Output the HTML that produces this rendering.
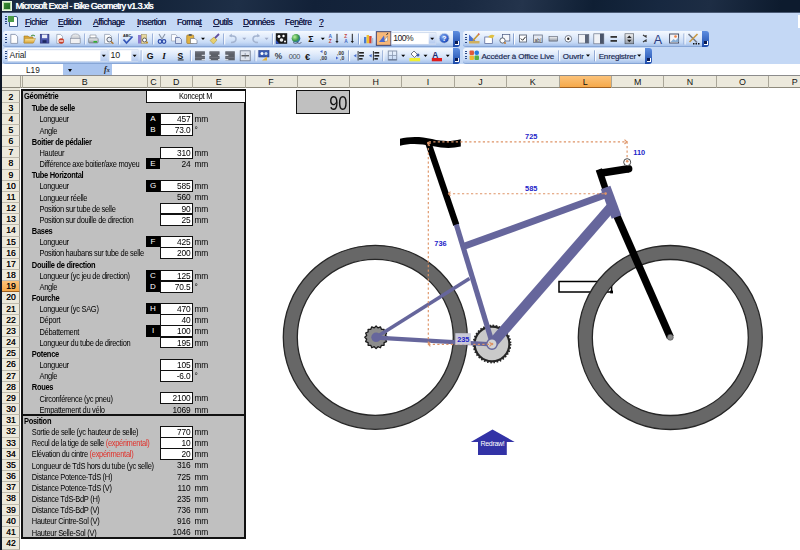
<!DOCTYPE html><html><head><meta charset="utf-8"><style>
*{margin:0;padding:0;box-sizing:border-box}
html,body{width:800px;height:550px;overflow:hidden;background:#fff;font-family:"Liberation Sans",sans-serif;position:relative}
.a{position:absolute}
.t{white-space:nowrap}
#title{left:0;top:0;width:800px;height:13px;background:linear-gradient(100deg,#1b2b42 0px,#14243a 150px,#1e2f47 235px,#122138 310px,#182840 450px,#24344c 515px,#0f1f34 585px,#172840 650px,#1d2d44 700px,#0d1b2e 770px);border-bottom:1px solid #4a5a74}
.tt{left:15.4px;top:0px;color:#fff;font:9px "Liberation Sans",sans-serif;letter-spacing:-0.6px;line-height:12.4px;white-space:nowrap;text-shadow:0.3px 0 0 #fff,0 0 2px #6a80a0}
#menu{left:0;top:13px;width:800px;height:50.5px;background:#c4d8f5}
.mi{top:16.5px;font:8.6px "Liberation Sans",sans-serif;letter-spacing:-0.45px;color:#18204a;line-height:10px;white-space:nowrap;text-shadow:0 0 0.25px #18204a}
.mi u{text-decoration:underline;text-underline-offset:1px}
.tb{background:linear-gradient(180deg,#f5f9fe 0%,#e0ebfb 40%,#c8dbf6 75%,#a6c1ea 100%);border-radius:3px 0 0 3px;height:15.5px;border-bottom:1px solid #87a6d6}
.cap{background:linear-gradient(180deg,#5e8ee0,#1c4aaa);border-radius:0 3px 3px 0;width:7px;height:15.5px}
.cap::after{content:"";position:absolute;left:2px;bottom:2px;width:3px;height:3px;border-right:1px solid #fff;border-bottom:1px solid #fff;background:#0a1a50}
.grip{width:2px;height:10px;background:repeating-linear-gradient(180deg,#2c4a88 0 1px,transparent 1px 2.5px)}
.sep{width:2px;height:11px;border-left:1px solid #8aa6d6;border-right:1px solid #fff}
.dd{width:0;height:0;border-left:2px solid transparent;border-right:2px solid transparent;border-top:2px solid #000}
.fld{background:#fff;border:1px solid #c9d6ea;height:13px}
.fdd{background:linear-gradient(180deg,#dbe6f8,#b8cdef);width:6px;height:11px}
.tbt{font:7.6px "Liberation Sans",sans-serif;color:#102050;white-space:nowrap;line-height:10px}
#fbar{left:2px;top:63.5px;width:798px;height:12.5px;background:#fff;border-bottom:1px solid #8c8c8c}
#colh{left:2px;top:76px;width:798px;height:12px;background:#ece9dc;border-bottom:1px solid #8e8a7c}
.ch{top:76px;height:11.5px;border-left:1px solid #aaa698;font:8.9px "Liberation Sans",sans-serif;color:#111;text-align:center;line-height:13px}
.rh{left:2px;width:18px;padding-left:1px;text-shadow:0 0 0.3px #000;border-bottom:1px solid #bfbbae;border-right:1px solid #9a968a;font:8.6px "Liberation Sans",sans-serif;color:#111;text-align:center;background:#ece9dc}
.c{font:7.5px "Liberation Sans",sans-serif;letter-spacing:-0.3px;color:#000;white-space:nowrap;line-height:11px;transform:scaleY(1.14);transform-origin:0 55%}
.n{font:8.4px "Liberation Sans",sans-serif;letter-spacing:-0.15px;color:#000;white-space:nowrap;line-height:11px;text-align:right;transform:scaleY(1.1);transform-origin:50% 60%}
.b{font-weight:bold}
.red{color:#e0302a}
.blk{background:#000;color:#fff;font:8px "Liberation Sans",sans-serif;text-align:center;line-height:11px}
.box{background:#fff;border:1px solid #111}
</style></head><body>
<div id="title" class="a">
<div class="a" style="left:1.5px;top:1px;width:10px;height:10px;background:#b9dca8;border:1px solid #e8f6e0"><div class="a" style="left:1px;top:1px;width:6px;height:6px;background:linear-gradient(135deg,#3b8d34,#1f6a22)"></div></div>
<div class="a tt">Microsoft Excel - Bike Geometry v1.3.xls</div>
</div>
<div id="menu" class="a"></div>
<div class="a" style="left:797.5px;top:15px;width:3px;height:13px;background:#fff"></div>
<div class="a grip" style="left:5px;top:16px;height:10px"></div>
<div class="a" style="left:9px;top:16px;width:9px;height:11px;background:#fff;border:1px solid #3a5a8a;border-radius:0 2px 0 0"></div>
<div class="a" style="left:8px;top:16px;width:6px;height:6px;background:#4c9c48"></div>
<div class="a mi" style="left:25px"><u>F</u>ichier</div>
<div class="a mi" style="left:58px"><u>E</u>dition</div>
<div class="a mi" style="left:93px"><u>A</u>ffichage</div>
<div class="a mi" style="left:137px"><u>I</u>nsertion</div>
<div class="a mi" style="left:177px">Forma<u>t</u></div>
<div class="a mi" style="left:213px"><u>O</u>utils</div>
<div class="a mi" style="left:243px"><u>D</u>onnées</div>
<div class="a mi" style="left:285px">Fe<u>n</u>être</div>
<div class="a mi" style="left:319px"><u>?</u></div>
<div class="a tb" style="left:3px;top:31px;width:450px"></div>
<div class="a cap" style="left:453px;top:31px"></div>
<div class="a grip" style="left:5px;top:34px"></div>
<div class="a tb" style="left:463px;top:31px;width:239px"></div>
<div class="a cap" style="left:702px;top:31px"></div>
<div class="a grip" style="left:465px;top:34px"></div>
<div class="a tb" style="left:3px;top:48px;width:450px"></div>
<div class="a cap" style="left:453px;top:48px"></div>
<div class="a grip" style="left:5px;top:51px"></div>
<div class="a tb" style="left:463px;top:48px;width:182px"></div>
<div class="a cap" style="left:645px;top:48px"></div>
<div class="a grip" style="left:465px;top:51px"></div>
<svg class="a" style="left:0;top:0" width="800" height="64" viewBox="0 0 800 64">
<defs><linearGradient id="gy" x1="0" y1="0" x2="0" y2="1"><stop offset="0" stop-color="#f4f4f4"/><stop offset="1" stop-color="#9098a4"/></linearGradient><linearGradient id="fd" x1="0" y1="0" x2="0" y2="1"><stop offset="0" stop-color="#fbe49a"/><stop offset="1" stop-color="#d9a437"/></linearGradient><linearGradient id="dd" x1="0" y1="0" x2="0" y2="1"><stop offset="0" stop-color="#e4ecfa"/><stop offset="1" stop-color="#b4caef"/></linearGradient><radialGradient id="gl" cx="0.35" cy="0.35" r="0.7"><stop offset="0" stop-color="#b8f0a0"/><stop offset="0.6" stop-color="#3f9c4a"/><stop offset="1" stop-color="#2a6ab8"/></radialGradient><radialGradient id="hp" cx="0.4" cy="0.35" r="0.7"><stop offset="0" stop-color="#8fb4f4"/><stop offset="0.7" stop-color="#2c5cc8"/><stop offset="1" stop-color="#1c3c98"/></radialGradient></defs>
<path d="M10.8,34.4 H15.3 L17.6,36.7 V43.4 H10.8 Z" fill="#fdfdfd" stroke="#7f8ca4" stroke-width="0.8"/>
<path d="M24,36 h4 l1,1 h4 v6 h-9z" fill="#d9a437" stroke="#a07820" stroke-width="0.6"/><path d="M25,38.5 h10.5 l-2,4.5 h-9.5z" fill="url(#fd)" stroke="#b08a30" stroke-width="0.5"/><path d="M31,36 q2,-2 4,0" fill="none" stroke="#3a8a3a" stroke-width="1"/>
<rect x="40.3" y="34.3" width="8.6" height="8.8" fill="#4b57ad" stroke="#2a3378" stroke-width="0.7"/><rect x="42" y="34.6" width="5.2" height="3.6" fill="#e8ecf8"/><rect x="42.5" y="40.2" width="4" height="2.6" fill="#1e2860"/>
<path d="M56.8,34.4 H60.5 L62.5,36.4 V43.4 H56.8 Z" fill="#fdfdfd" stroke="#8a96aa" stroke-width="0.7"/><circle cx="61.3" cy="41" r="2.8" fill="#c8402c"/><rect x="59.3" y="40.4" width="4" height="1.2" fill="#fff"/>
<path d="M71,38 q0,-4 4.5,-4 q4.5,0 4.5,4 v5 h-9z" fill="url(#gy)" stroke="#8890a0" stroke-width="0.6"/><rect x="70.3" y="38.5" width="9.8" height="4.8" fill="#f0f0f2" stroke="#8890a0" stroke-width="0.6"/>
<rect x="84.25" y="33.5" width="1" height="11" fill="#8aa4d2"/><rect x="85.25" y="33.5" width="1" height="11" fill="#fff"/>
<path d="M90,35 h6 v3 h-6z" fill="#fff" stroke="#808890" stroke-width="0.6"/><rect x="88.6" y="38" width="9.6" height="5" rx="1" fill="url(#gy)" stroke="#6a7280" stroke-width="0.6"/><rect x="93.5" y="41" width="3.5" height="1.6" fill="#30b030"/>
<path d="M104.6,34.4 H109.5 L111.5,36.4 V43.4 H104.6 Z" fill="#fdfdfd" stroke="#8a96aa" stroke-width="0.7"/><circle cx="109.3" cy="39.6" r="2.4" fill="#e8eef8" stroke="#505868" stroke-width="0.9"/><path d="M111,41.4 l2.4,2.4" stroke="#b07830" stroke-width="1.4"/>
<rect x="118.2" y="33.5" width="1" height="11" fill="#8aa4d2"/><rect x="119.2" y="33.5" width="1" height="11" fill="#fff"/>
<text x="123" y="36.6" font-family="Liberation Sans" font-weight="bold" font-size="3.8" fill="#222">ABC</text><path d="M123.5,39.5 l3,3.5 l6,-6.5" fill="none" stroke="#3456b8" stroke-width="1.8"/>
<rect x="138" y="35" width="3.5" height="8.5" fill="#8a7ad0"/><rect x="141.5" y="34.5" width="5" height="9" fill="#e8d8a0" stroke="#9a8a50" stroke-width="0.5"/><circle cx="144.5" cy="40" r="2" fill="#fff" stroke="#404040" stroke-width="0.8"/><circle cx="147" cy="42.6" r="1.1" fill="#c09030"/>
<rect x="152.2" y="33.5" width="1" height="11" fill="#8aa4d2"/><rect x="153.2" y="33.5" width="1" height="11" fill="#fff"/>
<path d="M159,34 l3,5 M165,34 l-3,5" stroke="#8894a8" stroke-width="1.1"/><circle cx="160" cy="41.5" r="1.8" fill="none" stroke="#2c4aa8" stroke-width="1.2"/><circle cx="164" cy="41.5" r="1.8" fill="none" stroke="#2c4aa8" stroke-width="1.2"/>
<path d="M171.5,34.5 h4 l1.5,1.5 v5 h-5.5z" fill="#fbfbfd" stroke="#8a96aa" stroke-width="0.6"/><path d="M175.5,37.5 h4 l2,2 v4 h-6z" fill="#dfe6f4" stroke="#4a5a90" stroke-width="0.7"/>
<rect x="186.7" y="35" width="7" height="8.5" rx="1" fill="#e0b040" stroke="#9a7020" stroke-width="0.6"/><rect x="188.7" y="34" width="3" height="2" fill="#606060"/><path d="M190.5,38.5 h4.5 l2,2 v3 h-6.5z" fill="#fff" stroke="#606a80" stroke-width="0.6"/>
<path d="M201,37.8 h4 l-2,2.2z" fill="#000"/>
<path d="M210,40.5 l4,-3.5 l3,3 l-3.5,4z" fill="#e8d070" stroke="#a08a30" stroke-width="0.5"/><path d="M215,38 l4,-4" stroke="#6050a0" stroke-width="1.8"/>
<rect x="223.2" y="33.5" width="1" height="11" fill="#8aa4d2"/><rect x="224.2" y="33.5" width="1" height="11" fill="#fff"/>
<path d="M231,42.5 q5,0 5,-3.5 q0,-3 -3.5,-3 h-3" fill="none" stroke="#a4b4d0" stroke-width="1.5"/><path d="M229.5,35.5 l2.3,-2 v4z" fill="#a4b4d0"/>
<path d="M242.3,37.8 h4 l-2,2.2z" fill="#a0acc8"/>
<path d="M258,42.5 q-5,0 -5,-3.5 q0,-3 3.5,-3 h3" fill="none" stroke="#a4b4d0" stroke-width="1.5"/><path d="M259.5,35.5 l-2.3,-2 v4z" fill="#a4b4d0"/>
<path d="M264.6,37.8 h4 l-2,2.2z" fill="#a0acc8"/>
<rect x="271.9" y="33.5" width="1" height="11" fill="#8aa4d2"/><rect x="272.9" y="33.5" width="1" height="11" fill="#fff"/>
<rect x="275.8" y="33.2" width="11.4" height="10.6" fill="#1a1a1a"/><circle cx="279" cy="36.5" r="1.4" fill="#fff"/><circle cx="283.5" cy="36" r="1.2" fill="#fff"/><circle cx="281.5" cy="40" r="1.8" fill="#eee"/><circle cx="285" cy="41.5" r="1" fill="#fff"/><path d="M276,40 l3.5,3.8 h-3.5z" fill="#2a4ab8"/>
<circle cx="296" cy="38.3" r="4.3" fill="url(#gl)"/><path d="M293,42.5 q2.5,2 5,0 M297,42.5 q2.5,2 4.5,0" fill="none" stroke="#505a70" stroke-width="0.9"/>
<text x="308.3" y="42.2" font-family="Liberation Sans" font-weight="bold" font-size="9" fill="#111">&#931;</text>
<path d="M320.8,37.8 h4 l-2,2.2z" fill="#000"/>
<text x="328.5" y="38" font-family="Liberation Sans" font-weight="bold" font-size="4.8" fill="#3a64c0">A</text><text x="328.8" y="43.3" font-family="Liberation Sans" font-weight="bold" font-size="4.8" fill="#c04040">Z</text><path d="M337,33.8 v8" stroke="#222" stroke-width="1"/><path d="M335.4,41 h3.2 l-1.6,2.2z" fill="#222"/>
<text x="344.2" y="38" font-family="Liberation Sans" font-weight="bold" font-size="4.8" fill="#c04040">Z</text><text x="344.2" y="43.3" font-family="Liberation Sans" font-weight="bold" font-size="4.8" fill="#3a64c0">A</text><path d="M352.3,33.8 v8" stroke="#222" stroke-width="1"/><path d="M350.7,41 h3.2 l-1.6,2.2z" fill="#222"/>
<rect x="358.0" y="33.5" width="1" height="11" fill="#8aa4d2"/><rect x="359.0" y="33.5" width="1" height="11" fill="#fff"/>
<rect x="364" y="37" width="2.4" height="6.3" fill="#4a7ad0"/><rect x="366.6" y="35" width="2.4" height="8.3" fill="#f0c030"/><rect x="369.2" y="36" width="2.4" height="7.3" fill="#d84030"/><rect x="371.6" y="38" width="1.6" height="5.3" fill="#b0b8c8"/>
<rect x="376.3" y="31.7" width="14.6" height="13.6" fill="#f8b878" stroke="#2c3468" stroke-width="0.9"/><path d="M379,42 l5,-6.5 l1,6.5z" fill="#4a6ad0"/><path d="M384,41 l3.5,-5 v5z" fill="#fff" stroke="#666" stroke-width="0.4"/><path d="M386.5,35 l1.5,-2" stroke="#333" stroke-width="1"/>
<rect x="391.3" y="32.7" width="44.6" height="11.6" fill="#fff" stroke="#c2d2ea" stroke-width="0.7"/><rect x="428.7" y="33.2" width="7" height="10.6" fill="url(#dd)"/>
<path d="M430.2,37.8 h4 l-2,2.2z" fill="#000"/>
<text x="393.2" y="41.2" font-family="Liberation Sans" font-size="8.6" fill="#1a1a1a" letter-spacing="-0.55">100%</text>
<circle cx="444.2" cy="38.3" r="4.9" fill="url(#hp)" stroke="#c0d0ec" stroke-width="0.8"/><text x="444.2" y="41.2" font-family="Liberation Sans" font-weight="bold" font-size="7.2" fill="#fff" text-anchor="middle">?</text>
<path d="M469,34.5 v7 h7z" fill="#4a70d0"/><rect x="469" y="41" width="10.5" height="2.5" fill="#d0b060"/><path d="M473,40.5 l5.5,-6" stroke="#c89830" stroke-width="1.6"/><path d="M478.3,34.6 l1,-1" stroke="#d05040" stroke-width="1.6"/>
<rect x="484.8" y="37" width="7.5" height="6.5" fill="#fff" stroke="#4a5a90" stroke-width="0.7"/><path d="M488,37 q3,-3.5 6.5,-1.5 l-2,3z" fill="#e0c040"/>
<rect x="502.5" y="34.5" width="7.3" height="6.5" fill="#f4f6fa" stroke="#4a5a80" stroke-width="0.7"/><circle cx="502.5" cy="40.5" r="2.6" fill="#fff" stroke="#505868" stroke-width="0.9"/><circle cx="505" cy="43" r="1.1" fill="#c08040"/>
<rect x="513.0" y="33.5" width="1" height="11" fill="#8aa4d2"/><rect x="514.0" y="33.5" width="1" height="11" fill="#fff"/>
<rect x="519.5" y="35" width="7" height="7" fill="#fff" stroke="#606878" stroke-width="0.9"/><path d="M520.8,38.5 l1.8,1.8 l3,-3.5" fill="none" stroke="#222" stroke-width="1"/>
<rect x="533.5" y="35" width="8.8" height="7.5" fill="#e4e8f0" stroke="#6a7488" stroke-width="0.8"/><text x="534.6" y="41.5" font-family="Liberation Sans" font-size="5" fill="#333">ab|</text>
<rect x="549" y="36.5" width="8.6" height="4.6" fill="url(#gy)" stroke="#505868" stroke-width="0.6"/>
<circle cx="568.3" cy="38.8" r="3.3" fill="#fff" stroke="#6a7080" stroke-width="0.9"/><circle cx="568.3" cy="38.8" r="1.2" fill="#222"/>
<rect x="578.5" y="34.5" width="10.3" height="8.6" fill="#f0f2f6" stroke="#6a7488" stroke-width="0.7"/><rect x="585" y="34.5" width="3.8" height="8.6" fill="#5a6478"/>
<rect x="593.8" y="33.8" width="10" height="10" fill="#f0f2f6" stroke="#6a7488" stroke-width="0.7"/><rect x="600" y="33.8" width="3.8" height="10" fill="#4a5468"/>
<rect x="610.5" y="36" width="6.5" height="1.8" fill="#333"/><rect x="610.5" y="40" width="6.5" height="1.8" fill="#333"/>
<rect x="625" y="33.8" width="8.7" height="10" fill="url(#gy)" stroke="#404850" stroke-width="0.6"/><path d="M627,38 l2.3,-2.5 l2.3,2.5z M627,39.8 l2.3,2.5 l2.3,-2.5z" fill="#222"/>
<path d="M643,35 l3,2 v-2 M643,42 l3,-2 v2" fill="none" stroke="#333" stroke-width="1.2"/>
<text x="653.8" y="43.5" font-family="Liberation Sans" font-size="12.5" fill="#2a3c80">A</text>
<rect x="669.6" y="34" width="9" height="9" fill="#f4f4f8" stroke="#3a4258" stroke-width="0.9"/><path d="M670.5,42 l3,-3 l2,1.5 l3,-3 v4.5z" fill="#8ab0d8"/><circle cx="675.5" cy="36.5" r="1.3" fill="#f08040"/>
<rect x="683.5" y="33.5" width="1" height="11" fill="#8aa4d2"/><rect x="684.5" y="33.5" width="1" height="11" fill="#fff"/>
<path d="M688.5,34 l8.5,8.5" stroke="#707888" stroke-width="1.6"/><path d="M697.5,34 l-8,8" stroke="#c89840" stroke-width="1.6"/><rect x="693" y="43" width="1.5" height="1.5" fill="#111"/><rect x="695.5" y="43" width="1.5" height="1.5" fill="#111"/><rect x="698" y="43" width="1.5" height="1.5" fill="#111"/>
<rect x="7.6" y="49.8" width="99.6" height="11.8" fill="#fff" stroke="#c2d2ea" stroke-width="0.7"/><rect x="100.3" y="50.2" width="7" height="11" fill="url(#dd)"/>
<path d="M101.8,54.8 h4 l-2,2.2z" fill="#000"/>
<text x="9.6" y="57.8" font-family="Liberation Sans" font-size="8.5" fill="#1a1a1a" letter-spacing="-0.1">Arial</text>
<rect x="109" y="49.8" width="29" height="11.8" fill="#fff" stroke="#c2d2ea" stroke-width="0.7"/><rect x="131.3" y="50.2" width="6.7" height="11" fill="url(#dd)"/>
<path d="M132.6,54.8 h4 l-2,2.2z" fill="#000"/>
<text x="110.4" y="57.9" font-family="Liberation Sans" font-size="8.8" fill="#1a1a1a">10</text>
<rect x="140.7" y="50.3" width="1" height="11" fill="#8aa4d2"/><rect x="141.7" y="50.3" width="1" height="11" fill="#fff"/>
<text x="146.7" y="59.2" font-family="Liberation Sans" font-weight="bold" font-size="8.8" fill="#111">G</text>
<text x="162.3" y="59.2" font-family="Liberation Serif" font-style="italic" font-weight="bold" font-size="9.2" fill="#111">I</text>
<text x="177.6" y="58.6" font-family="Liberation Sans" font-weight="bold" font-size="8.6" fill="#111">S</text><rect x="177.8" y="59.5" width="5.8" height="0.9" fill="#111"/>
<rect x="189.9" y="50.3" width="1" height="11" fill="#8aa4d2"/><rect x="190.9" y="50.3" width="1" height="11" fill="#fff"/>
<rect x="195" y="51.3" width="9.9" height="9" fill="#5c6068"/>
<rect x="195" y="52.6" width="9.9" height="0.6" fill="#7a7e88"/>
<rect x="201.732" y="54.8" width="3.668" height="1" fill="#eef2fa"/>
<rect x="195" y="57.0" width="9.9" height="0.6" fill="#7a7e88"/>
<rect x="201.732" y="59.2" width="3.668" height="1" fill="#eef2fa"/>
<rect x="209.4" y="51.3" width="10.1" height="9" fill="#5c6068"/>
<rect x="209.4" y="52.6" width="10.1" height="0.6" fill="#7a7e88"/>
<rect x="208.9" y="54.8" width="2" height="1" fill="#eef2fa"/><rect x="218.0" y="54.8" width="2" height="1" fill="#eef2fa"/>
<rect x="209.4" y="57.0" width="10.1" height="0.6" fill="#7a7e88"/>
<rect x="208.9" y="59.2" width="2" height="1" fill="#eef2fa"/><rect x="218.0" y="59.2" width="2" height="1" fill="#eef2fa"/>
<rect x="225.3" y="51.3" width="9.5" height="9" fill="#5c6068"/>
<rect x="225.3" y="52.6" width="9.5" height="0.6" fill="#7a7e88"/>
<rect x="224.8" y="54.8" width="3.54" height="1" fill="#eef2fa"/>
<rect x="225.3" y="57.0" width="9.5" height="0.6" fill="#7a7e88"/>
<rect x="224.8" y="59.2" width="3.54" height="1" fill="#eef2fa"/>
<rect x="240.2" y="50.8" width="10" height="10" fill="#dfe4ee" stroke="#6a7488" stroke-width="0.8"/><path d="M241.5,55.8 h7.5" stroke="#222" stroke-width="1"/><path d="M245.2,53 v5.6" stroke="#6a7488" stroke-width="0.6"/>
<rect x="254.5" y="50.3" width="1" height="11" fill="#8aa4d2"/><rect x="255.5" y="50.3" width="1" height="11" fill="#fff"/>
<rect x="258.8" y="50.5" width="10.2" height="6.5" fill="#3a5ab0" stroke="#223a88" stroke-width="0.6"/><circle cx="262" cy="53.5" r="1.5" fill="#fff"/><circle cx="266" cy="53.5" r="1.5" fill="#cde"/><path d="M262,60.5 l5,-4 v4z" fill="#e0b040"/>
<text x="274.8" y="59" font-family="Liberation Sans" font-weight="bold" font-size="8.4" fill="#3a3e48">%</text>
<text x="288.8" y="59" font-family="Liberation Sans" font-size="7.4" fill="#4a4e58" letter-spacing="-0.4">000</text>
<text x="305" y="59.5" font-family="Liberation Sans" font-weight="bold" font-size="9.2" fill="#111">&#8364;</text>
<text x="324" y="54.5" font-family="Liberation Sans" font-weight="bold" font-size="5" fill="#333">0</text><text x="320" y="59.8" font-family="Liberation Sans" font-weight="bold" font-size="5" fill="#333">,00</text><path d="M320,51.5 l2.5,-1.5 v3z" fill="#4a6ad0"/>
<text x="337" y="54.5" font-family="Liberation Sans" font-weight="bold" font-size="5" fill="#333">,00</text><text x="340" y="59.8" font-family="Liberation Sans" font-weight="bold" font-size="5" fill="#333">,0</text><path d="M338.5,58 l-2.5,-1.5 v3z" fill="#4a6ad0"/>
<rect x="348.1" y="50.3" width="1" height="11" fill="#8aa4d2"/><rect x="349.1" y="50.3" width="1" height="11" fill="#fff"/>
<rect x="357.6" y="51" width="1" height="9.5" fill="#333"/><rect x="359.1" y="52" width="4.8" height="1.6" fill="#222"/><rect x="359.1" y="55" width="4.8" height="1.6" fill="#222"/><rect x="359.1" y="58" width="3.5" height="1.6" fill="#222"/><path d="M353.6,55.8 l2.8,-1.8 v3.6z" fill="#4a70d0"/>
<rect x="372.9" y="51" width="1" height="9.5" fill="#333"/><rect x="374.4" y="52" width="4.8" height="1.6" fill="#222"/><rect x="374.4" y="55" width="4.8" height="1.6" fill="#222"/><rect x="374.4" y="58" width="3.5" height="1.6" fill="#222"/><path d="M368.9,55.8 l2.8,-1.8 v3.6z" fill="#4a70d0"/>
<rect x="382.3" y="50.3" width="1" height="11" fill="#8aa4d2"/><rect x="383.3" y="50.3" width="1" height="11" fill="#fff"/>
<rect x="388.3" y="51" width="8.4" height="9" fill="none" stroke="#8a98b0" stroke-width="1"/><path d="M392.5,51 v9 M388.3,55.5 h8.4" stroke="#8a98b0" stroke-width="0.8"/><rect x="388.3" y="59.3" width="8.4" height="1" fill="#5a6a88"/>
<path d="M401.2,54.8 h4 l-2,2.2z" fill="#000"/>
<path d="M411,54 l3,-3 l3.5,3.5 l-3,3z" fill="#fff" stroke="#505868" stroke-width="0.8"/><circle cx="418" cy="55" r="1.5" fill="#3a5aa8"/><rect x="409.5" y="58" width="10.6" height="3.3" fill="#f0f030"/>
<path d="M423.5,54.8 h4 l-2,2.2z" fill="#000"/>
<text x="432.3" y="57.6" font-family="Liberation Sans" font-weight="bold" font-size="8.4" fill="#1c2c70">A</text><rect x="431.8" y="58" width="10.2" height="3.3" fill="#e01c1c"/>
<path d="M445.75,54.8 h4 l-2,2.2z" fill="#000"/>
<rect x="469.5" y="50.5" width="4.5" height="4.5" rx="1" fill="#e05a3a"/><rect x="474.5" y="50.5" width="4.5" height="4.5" rx="2" fill="#2a7ad8"/><rect x="469.5" y="55.5" width="4.5" height="4.5" rx="1" fill="#f0b830"/><rect x="474.5" y="55.5" width="4.5" height="4.5" rx="1" fill="#58b040"/>
<text x="481.4" y="58.7" font-family="Liberation Sans" font-size="8" fill="#1a2850" stroke="#1a2850" stroke-width="0.18" letter-spacing="-0.15">Accéder à Office Live</text>
<rect x="558.2" y="50.3" width="1" height="11" fill="#8aa4d2"/><rect x="559.2" y="50.3" width="1" height="11" fill="#fff"/>
<text x="562.8" y="58.7" font-family="Liberation Sans" font-size="8" fill="#1a2850" stroke="#1a2850" stroke-width="0.18" letter-spacing="-0.13">Ouvrir</text>
<path d="M586,54.6 h4 l-2,2.2z" fill="#000"/>
<rect x="594.1" y="50.3" width="1" height="11" fill="#8aa4d2"/><rect x="595.1" y="50.3" width="1" height="11" fill="#fff"/>
<text x="598.7" y="58.7" font-family="Liberation Sans" font-size="8" fill="#1a2850" stroke="#1a2850" stroke-width="0.18" letter-spacing="-0.17">Enregistrer</text>
<path d="M637.2,54.6 h4 l-2,2.2z" fill="#000"/>
</svg>
<div id="fbar" class="a"></div>
<div class="a" style="left:63px;top:64px;width:49px;height:11px;background:#a9c4ee"></div>
<div class="a dd" style="left:68px;top:68.5px;border-left-width:2.5px;border-right-width:2.5px;border-top-width:3px"></div>
<div class="a" style="left:104px;top:64px;font:italic bold 8px Liberation Serif;color:#222;line-height:11px">f<span style="font-size:6px">x</span></div>
<div class="a" style="left:26px;top:64px;font:8.3px Liberation Sans;color:#222;line-height:12px">L19</div>
<div id="colh" class="a"></div>
<div class="a ch" style="left:19.5px;width:2.5px;"></div>
<div class="a ch" style="left:22.0px;width:124.5px;">B</div>
<div class="a ch" style="left:146.5px;width:13px;">C</div>
<div class="a ch" style="left:159.5px;width:32.5px;">D</div>
<div class="a ch" style="left:192.0px;width:52.5px;">E</div>
<div class="a ch" style="left:244.5px;width:52px;">F</div>
<div class="a ch" style="left:296.5px;width:52.39999999999998px;">G</div>
<div class="a ch" style="left:348.9px;width:52.400000000000034px;">H</div>
<div class="a ch" style="left:401.3px;width:52.39999999999998px;">I</div>
<div class="a ch" style="left:453.7px;width:52.400000000000034px;">J</div>
<div class="a ch" style="left:506.1px;width:52.39999999999998px;">K</div>
<div class="a ch" style="left:558.5px;width:52.39999999999998px;background:linear-gradient(#fbc27a,#f6a94a);border-bottom:1px solid #a06020;">L</div>
<div class="a ch" style="left:610.9px;width:52.39999999999998px;">M</div>
<div class="a ch" style="left:663.3px;width:52.40000000000009px;">N</div>
<div class="a ch" style="left:715.7px;width:52.399999999999864px;">O</div>
<div class="a ch" style="left:768.0999999999999px;width:52.40000000000009px;">P</div>
<div class="a rh" style="top:90.5px;height:12px;line-height:12px;">2</div>
<div class="a rh" style="top:102.5px;height:11.17px;line-height:11.17px;">3</div>
<div class="a rh" style="top:113.67px;height:11.17px;line-height:11.17px;">4</div>
<div class="a rh" style="top:124.84px;height:11.17px;line-height:11.17px;">5</div>
<div class="a rh" style="top:136.01px;height:11.17px;line-height:11.17px;">6</div>
<div class="a rh" style="top:147.18px;height:11.17px;line-height:11.17px;">7</div>
<div class="a rh" style="top:158.35px;height:11.17px;line-height:11.17px;">8</div>
<div class="a rh" style="top:169.51999999999998px;height:11.17px;line-height:11.17px;">9</div>
<div class="a rh" style="top:180.69px;height:11.17px;line-height:11.17px;">10</div>
<div class="a rh" style="top:191.86px;height:11.17px;line-height:11.17px;">11</div>
<div class="a rh" style="top:203.03px;height:11.17px;line-height:11.17px;">12</div>
<div class="a rh" style="top:214.2px;height:11.17px;line-height:11.17px;">13</div>
<div class="a rh" style="top:225.37px;height:11.17px;line-height:11.17px;">14</div>
<div class="a rh" style="top:236.54px;height:11.17px;line-height:11.17px;">15</div>
<div class="a rh" style="top:247.71px;height:11.17px;line-height:11.17px;">16</div>
<div class="a rh" style="top:258.88px;height:11.17px;line-height:11.17px;">17</div>
<div class="a rh" style="top:270.05px;height:11.17px;line-height:11.17px;">18</div>
<div class="a rh" style="top:281.22px;height:11.17px;line-height:11.17px;background:linear-gradient(#fbc27a,#f6a94a);border-bottom-color:#a06020;">19</div>
<div class="a rh" style="top:292.39px;height:11.17px;line-height:11.17px;">20</div>
<div class="a rh" style="top:303.56px;height:11.17px;line-height:11.17px;">21</div>
<div class="a rh" style="top:314.73px;height:11.17px;line-height:11.17px;">22</div>
<div class="a rh" style="top:325.9px;height:11.17px;line-height:11.17px;">23</div>
<div class="a rh" style="top:337.07px;height:11.17px;line-height:11.17px;">24</div>
<div class="a rh" style="top:348.24px;height:11.17px;line-height:11.17px;">25</div>
<div class="a rh" style="top:359.41px;height:11.17px;line-height:11.17px;">26</div>
<div class="a rh" style="top:370.58px;height:11.17px;line-height:11.17px;">27</div>
<div class="a rh" style="top:381.75px;height:11.17px;line-height:11.17px;">28</div>
<div class="a rh" style="top:392.92px;height:11.17px;line-height:11.17px;">29</div>
<div class="a rh" style="top:404.09px;height:11.17px;line-height:11.17px;">30</div>
<div class="a rh" style="top:415.26px;height:11.17px;line-height:11.17px;">31</div>
<div class="a rh" style="top:426.43px;height:11.17px;line-height:11.17px;">32</div>
<div class="a rh" style="top:437.6px;height:11.17px;line-height:11.17px;">33</div>
<div class="a rh" style="top:448.77px;height:11.17px;line-height:11.17px;">34</div>
<div class="a rh" style="top:459.94px;height:11.17px;line-height:11.17px;">35</div>
<div class="a rh" style="top:471.11px;height:11.17px;line-height:11.17px;">36</div>
<div class="a rh" style="top:482.28px;height:11.17px;line-height:11.17px;">37</div>
<div class="a rh" style="top:493.45px;height:11.17px;line-height:11.17px;">38</div>
<div class="a rh" style="top:504.62px;height:11.17px;line-height:11.17px;">39</div>
<div class="a rh" style="top:515.79px;height:11.17px;line-height:11.17px;">40</div>
<div class="a rh" style="top:526.96px;height:11.17px;line-height:11.17px;">41</div>
<div class="a rh" style="top:538.13px;height:11.870000000000005px;line-height:11.17px;">42</div>
<div class="a" style="left:2px;top:88px;width:18px;height:2.5px;background:#ece9dc;border-bottom:1px solid #9a968a"></div>
<div class="a" style="left:21px;top:89.2px;width:225px;height:449.8px;background:#c0c0c0;border:2px solid #111"></div>
<div class="a" style="left:21px;top:413.6px;width:225px;height:2px;background:#111"></div>
<div class="a box" style="left:146px;top:90.5px;width:99px;height:12.5px;border-top:none;border-right:none"></div>
<div class="a c" style="left:146px;top:91px;width:99px;text-align:center;line-height:12px">Koncept M</div>
<div class="a c b" style="left:24px;top:91.20px;line-height:12px">Géométrie</div>
<div class="a c b" style="left:31.8px;top:103.20px;line-height:11.17px">Tube de selle</div>
<div class="a c" style="left:39.5px;top:114.37px;line-height:11.17px">Longueur</div>
<div class="a blk" style="left:146px;top:113.17px;width:14px;height:11.37px;line-height:12.57px">A</div>
<div class="a box" style="left:160px;top:113.17px;width:33px;height:11.87px"></div>
<div class="a n" style="left:150px;width:40.5px;top:114.17px;line-height:11.77px">457</div>
<div class="a n" style="left:194.5px;top:114.17px;text-align:left;line-height:11.77px">mm</div>
<div class="a c" style="left:39.5px;top:125.54px;line-height:11.17px">Angle</div>
<div class="a blk" style="left:146px;top:124.34px;width:14px;height:11.37px;line-height:12.57px">B</div>
<div class="a box" style="left:160px;top:124.34px;width:33px;height:11.87px"></div>
<div class="a n" style="left:150px;width:40.5px;top:125.34px;line-height:11.77px">73.0</div>
<div class="a n" style="left:194.5px;top:125.34px;text-align:left;line-height:11.77px">°</div>
<div class="a c b" style="left:31.8px;top:136.71px;line-height:11.17px">Boitier de pédalier</div>
<div class="a c" style="left:39.5px;top:147.88px;line-height:11.17px">Hauteur</div>
<div class="a box" style="left:160px;top:146.68px;width:33px;height:11.87px"></div>
<div class="a n" style="left:150px;width:40.5px;top:147.68px;line-height:11.77px">310</div>
<div class="a n" style="left:194.5px;top:147.68px;text-align:left;line-height:11.77px">mm</div>
<div class="a c" style="left:39.5px;top:159.05px;line-height:11.17px">Différence axe boitier/axe moyeu</div>
<div class="a blk" style="left:146px;top:157.85px;width:14px;height:11.37px;line-height:12.57px">E</div>
<div class="a n" style="left:150px;width:40.5px;top:158.85px;line-height:11.77px">24</div>
<div class="a n" style="left:194.5px;top:158.85px;text-align:left;line-height:11.77px">mm</div>
<div class="a c b" style="left:31.8px;top:170.22px;line-height:11.17px">Tube Horizontal</div>
<div class="a c" style="left:39.5px;top:181.39px;line-height:11.17px">Longueur</div>
<div class="a blk" style="left:146px;top:180.19px;width:14px;height:11.37px;line-height:12.57px">G</div>
<div class="a box" style="left:160px;top:180.19px;width:33px;height:11.87px"></div>
<div class="a n" style="left:150px;width:40.5px;top:181.19px;line-height:11.77px">585</div>
<div class="a n" style="left:194.5px;top:181.19px;text-align:left;line-height:11.77px">mm</div>
<div class="a c" style="left:39.5px;top:192.56px;line-height:11.17px">Longueur réelle</div>
<div class="a n" style="left:150px;width:40.5px;top:192.36px;line-height:11.77px">560</div>
<div class="a n" style="left:194.5px;top:192.36px;text-align:left;line-height:11.77px">mm</div>
<div class="a c" style="left:39.5px;top:203.73px;line-height:11.17px">Position sur tube de selle</div>
<div class="a box" style="left:160px;top:202.53px;width:33px;height:11.87px"></div>
<div class="a n" style="left:150px;width:40.5px;top:203.53px;line-height:11.77px">90</div>
<div class="a n" style="left:194.5px;top:203.53px;text-align:left;line-height:11.77px">mm</div>
<div class="a c" style="left:39.5px;top:214.90px;line-height:11.17px">Position sur douille de direction</div>
<div class="a box" style="left:160px;top:213.70px;width:33px;height:11.87px"></div>
<div class="a n" style="left:150px;width:40.5px;top:214.70px;line-height:11.77px">25</div>
<div class="a n" style="left:194.5px;top:214.70px;text-align:left;line-height:11.77px">mm</div>
<div class="a c b" style="left:31.8px;top:226.07px;line-height:11.17px">Bases</div>
<div class="a c" style="left:39.5px;top:237.24px;line-height:11.17px">Longueur</div>
<div class="a blk" style="left:146px;top:236.04px;width:14px;height:11.37px;line-height:12.57px">F</div>
<div class="a box" style="left:160px;top:236.04px;width:33px;height:11.87px"></div>
<div class="a n" style="left:150px;width:40.5px;top:237.04px;line-height:11.77px">425</div>
<div class="a n" style="left:194.5px;top:237.04px;text-align:left;line-height:11.77px">mm</div>
<div class="a c" style="left:39.5px;top:248.41px;line-height:11.17px">Position haubans sur tube de selle</div>
<div class="a box" style="left:160px;top:247.21px;width:33px;height:11.87px"></div>
<div class="a n" style="left:150px;width:40.5px;top:248.21px;line-height:11.77px">200</div>
<div class="a n" style="left:194.5px;top:248.21px;text-align:left;line-height:11.77px">mm</div>
<div class="a c b" style="left:31.8px;top:259.58px;line-height:11.17px">Douille de direction</div>
<div class="a c" style="left:39.5px;top:270.75px;line-height:11.17px">Longueur (yc jeu de direction)</div>
<div class="a blk" style="left:146px;top:269.55px;width:14px;height:11.37px;line-height:12.57px">C</div>
<div class="a box" style="left:160px;top:269.55px;width:33px;height:11.87px"></div>
<div class="a n" style="left:150px;width:40.5px;top:270.55px;line-height:11.77px">125</div>
<div class="a n" style="left:194.5px;top:270.55px;text-align:left;line-height:11.77px">mm</div>
<div class="a c" style="left:39.5px;top:281.92px;line-height:11.17px">Angle</div>
<div class="a blk" style="left:146px;top:280.72px;width:14px;height:11.37px;line-height:12.57px">D</div>
<div class="a box" style="left:160px;top:280.72px;width:33px;height:11.87px"></div>
<div class="a n" style="left:150px;width:40.5px;top:281.72px;line-height:11.77px">70.5</div>
<div class="a n" style="left:194.5px;top:281.72px;text-align:left;line-height:11.77px">°</div>
<div class="a c b" style="left:31.8px;top:293.09px;line-height:11.17px">Fourche</div>
<div class="a c" style="left:39.5px;top:304.26px;line-height:11.17px">Longueur (yc SAG)</div>
<div class="a blk" style="left:146px;top:303.06px;width:14px;height:11.37px;line-height:12.57px">H</div>
<div class="a box" style="left:160px;top:303.06px;width:33px;height:11.87px"></div>
<div class="a n" style="left:150px;width:40.5px;top:304.06px;line-height:11.77px">470</div>
<div class="a n" style="left:194.5px;top:304.06px;text-align:left;line-height:11.77px">mm</div>
<div class="a c" style="left:39.5px;top:315.43px;line-height:11.17px">Déport</div>
<div class="a box" style="left:160px;top:314.23px;width:33px;height:11.87px"></div>
<div class="a n" style="left:150px;width:40.5px;top:315.23px;line-height:11.77px">40</div>
<div class="a n" style="left:194.5px;top:315.23px;text-align:left;line-height:11.77px">mm</div>
<div class="a c" style="left:39.5px;top:326.60px;line-height:11.17px">Débattement</div>
<div class="a blk" style="left:146px;top:325.40px;width:14px;height:11.37px;line-height:12.57px">I</div>
<div class="a box" style="left:160px;top:325.40px;width:33px;height:11.87px"></div>
<div class="a n" style="left:150px;width:40.5px;top:326.40px;line-height:11.77px">100</div>
<div class="a n" style="left:194.5px;top:326.40px;text-align:left;line-height:11.77px">mm</div>
<div class="a c" style="left:39.5px;top:337.77px;line-height:11.17px">Longueur du tube de direction</div>
<div class="a box" style="left:160px;top:336.57px;width:33px;height:11.87px"></div>
<div class="a n" style="left:150px;width:40.5px;top:337.57px;line-height:11.77px">195</div>
<div class="a n" style="left:194.5px;top:337.57px;text-align:left;line-height:11.77px">mm</div>
<div class="a c b" style="left:31.8px;top:348.94px;line-height:11.17px">Potence</div>
<div class="a c" style="left:39.5px;top:360.11px;line-height:11.17px">Longueur</div>
<div class="a box" style="left:160px;top:358.91px;width:33px;height:11.87px"></div>
<div class="a n" style="left:150px;width:40.5px;top:359.91px;line-height:11.77px">105</div>
<div class="a n" style="left:194.5px;top:359.91px;text-align:left;line-height:11.77px">mm</div>
<div class="a c" style="left:39.5px;top:371.28px;line-height:11.17px">Angle</div>
<div class="a box" style="left:160px;top:370.08px;width:33px;height:11.87px"></div>
<div class="a n" style="left:150px;width:40.5px;top:371.08px;line-height:11.77px">-6.0</div>
<div class="a n" style="left:194.5px;top:371.08px;text-align:left;line-height:11.77px">°</div>
<div class="a c b" style="left:31.8px;top:382.45px;line-height:11.17px">Roues</div>
<div class="a c" style="left:39.5px;top:393.62px;line-height:11.17px">Circonférence (yc pneu)</div>
<div class="a box" style="left:160px;top:392.42px;width:33px;height:11.87px"></div>
<div class="a n" style="left:150px;width:40.5px;top:393.42px;line-height:11.77px">2100</div>
<div class="a n" style="left:194.5px;top:393.42px;text-align:left;line-height:11.77px">mm</div>
<div class="a c" style="left:39.5px;top:404.79px;line-height:11.17px">Empattement du vélo</div>
<div class="a n" style="left:150px;width:40.5px;top:404.59px;line-height:11.77px">1069</div>
<div class="a n" style="left:194.5px;top:404.59px;text-align:left;line-height:11.77px">mm</div>
<div class="a c b" style="left:24px;top:415.96px;line-height:11.17px">Position</div>
<div class="a c" style="left:31.8px;top:427.13px;line-height:11.17px">Sortie de selle (yc hauteur de selle)</div>
<div class="a box" style="left:160px;top:425.93px;width:33px;height:11.87px"></div>
<div class="a n" style="left:150px;width:40.5px;top:426.93px;line-height:11.77px">770</div>
<div class="a n" style="left:194.5px;top:426.93px;text-align:left;line-height:11.77px">mm</div>
<div class="a c" style="left:31.8px;top:438.30px;line-height:11.17px">Recul de la tige de selle <span class=red>(expérimental)</span></div>
<div class="a box" style="left:160px;top:437.10px;width:33px;height:11.87px"></div>
<div class="a n" style="left:150px;width:40.5px;top:438.10px;line-height:11.77px">10</div>
<div class="a n" style="left:194.5px;top:438.10px;text-align:left;line-height:11.77px">mm</div>
<div class="a c" style="left:31.8px;top:449.47px;line-height:11.17px">Elévation du cintre <span class=red>(expérimental)</span></div>
<div class="a box" style="left:160px;top:448.27px;width:33px;height:11.87px"></div>
<div class="a n" style="left:150px;width:40.5px;top:449.27px;line-height:11.77px">20</div>
<div class="a n" style="left:194.5px;top:449.27px;text-align:left;line-height:11.77px">mm</div>
<div class="a c" style="left:31.8px;top:460.64px;line-height:11.17px">Longueur de TdS hors du tube (yc selle)</div>
<div class="a n" style="left:150px;width:40.5px;top:460.44px;line-height:11.77px">316</div>
<div class="a n" style="left:194.5px;top:460.44px;text-align:left;line-height:11.77px">mm</div>
<div class="a c" style="left:31.8px;top:471.81px;line-height:11.17px">Distance Potence-TdS (H)</div>
<div class="a n" style="left:150px;width:40.5px;top:471.61px;line-height:11.77px">725</div>
<div class="a n" style="left:194.5px;top:471.61px;text-align:left;line-height:11.77px">mm</div>
<div class="a c" style="left:31.8px;top:482.98px;line-height:11.17px">Distance Potence-TdS (V)</div>
<div class="a n" style="left:150px;width:40.5px;top:482.78px;line-height:11.77px">110</div>
<div class="a n" style="left:194.5px;top:482.78px;text-align:left;line-height:11.77px">mm</div>
<div class="a c" style="left:31.8px;top:494.15px;line-height:11.17px">Distance TdS-BdP (H)</div>
<div class="a n" style="left:150px;width:40.5px;top:493.95px;line-height:11.77px">235</div>
<div class="a n" style="left:194.5px;top:493.95px;text-align:left;line-height:11.77px">mm</div>
<div class="a c" style="left:31.8px;top:505.32px;line-height:11.17px">Distance TdS-BdP (V)</div>
<div class="a n" style="left:150px;width:40.5px;top:505.12px;line-height:11.77px">736</div>
<div class="a n" style="left:194.5px;top:505.12px;text-align:left;line-height:11.77px">mm</div>
<div class="a c" style="left:31.8px;top:516.49px;line-height:11.17px">Hauteur Cintre-Sol (V)</div>
<div class="a n" style="left:150px;width:40.5px;top:516.29px;line-height:11.77px">916</div>
<div class="a n" style="left:194.5px;top:516.29px;text-align:left;line-height:11.77px">mm</div>
<div class="a c" style="left:31.8px;top:527.66px;line-height:11.17px">Hauteur Selle-Sol (V)</div>
<div class="a n" style="left:150px;width:40.5px;top:527.46px;line-height:11.77px">1046</div>
<div class="a n" style="left:194.5px;top:527.46px;text-align:left;line-height:11.77px">mm</div>
<div class="a" style="left:296px;top:89.5px;width:53.5px;height:24.5px;background:#c0c0c0;border:1px solid #111"></div>
<div class="a" style="left:296px;top:89.5px;width:51.5px;height:24.5px;font:20.5px Liberation Sans;color:#111;text-align:right;line-height:25px;transform:scaleX(0.8);transform-origin:100% 50%">90</div>
<svg class="a" style="left:0;top:0" width="800" height="550" viewBox="0 0 800 550">
<rect x="559" y="281.5" width="52.6" height="10.5" fill="#fff" stroke="#000" stroke-width="1.5"/>
<rect x="610.2" y="290.6" width="2.8" height="2.8" fill="#000"/>
<circle cx="375.3" cy="337.3" r="85" fill="none" stroke="#676767" stroke-width="14"/>
<circle cx="375.3" cy="337.3" r="92" fill="none" stroke="#262626" stroke-width="1.3"/>
<circle cx="375.3" cy="337.3" r="78" fill="none" stroke="#262626" stroke-width="1.3"/>
<circle cx="670.3" cy="337.5" r="85" fill="none" stroke="#676767" stroke-width="14"/>
<circle cx="670.3" cy="337.5" r="92" fill="none" stroke="#262626" stroke-width="1.3"/>
<circle cx="670.3" cy="337.5" r="78" fill="none" stroke="#262626" stroke-width="1.3"/>
<polygon points="387.40,337.30 385.52,339.17 386.54,341.62 384.08,342.63 384.09,345.29 381.43,345.28 380.42,347.74 377.97,346.72 376.10,348.60 374.23,346.72 371.78,347.74 370.77,345.28 368.11,345.29 368.12,342.63 365.66,341.62 366.68,339.17 364.80,337.30 366.68,335.43 365.66,332.98 368.12,331.97 368.11,329.31 370.77,329.32 371.78,326.86 374.23,327.88 376.10,326.00 377.97,327.88 380.42,326.86 381.43,329.32 384.09,329.31 384.08,331.97 386.54,332.98 385.52,335.43" fill="#8c8c8c" stroke="#1a1a1a" stroke-width="1.3" stroke-linejoin="round"/>
<circle cx="492" cy="344" r="17.4" fill="#c9c9c9" stroke="#262626" stroke-width="2.2"/>
<circle cx="492" cy="344" r="18.5" fill="none" stroke="#262626" stroke-width="1.8" stroke-dasharray="1.55 1.68"/>
<line x1="428" y1="142" x2="456.3" y2="225" stroke="#000" stroke-width="6.3"/>
<path d="M400,138.8 C408,136.5 420,136 432,139 C444,142 452,141.2 460.8,139.2 L460.8,146.5 C452,148.5 444,148.5 432,146 C420,143.3 408,143.3 400,145.8 Z" fill="#000"/>
<line x1="598.9" y1="169.4" x2="605.5" y2="189" stroke="#000" stroke-width="6.6"/>
<line x1="600" y1="173.2" x2="628.6" y2="168.8" stroke="#000" stroke-width="7.6"/>
<circle cx="628.6" cy="168.8" r="3.8" fill="#000"/>
<circle cx="627.2" cy="162.2" r="3.5" fill="#fff" stroke="#333" stroke-width="0.9"/>
<line x1="616.5" y1="215" x2="670.3" y2="337.3" stroke="#000" stroke-width="7.4"/>
<circle cx="670.3" cy="337.3" r="3" fill="#8a8a8a" stroke="#333" stroke-width="0.5"/>
<line x1="376.1" y1="337.3" x2="469.5" y2="278.4" stroke="#66669c" stroke-width="3.6"/>
<line x1="376.1" y1="337.6" x2="492" y2="344.4" stroke="#66669c" stroke-width="4.4"/>
<line x1="456.3" y1="224.6" x2="492.5" y2="343.7" stroke="#66669c" stroke-width="5.2"/>
<line x1="462" y1="247" x2="609" y2="193.5" stroke="#66669c" stroke-width="6.8"/>
<line x1="492" y1="344" x2="613" y2="205" stroke="#66669c" stroke-width="10.2"/>
<line x1="605.6" y1="187.6" x2="616.5" y2="217" stroke="#66669c" stroke-width="10.2"/>
<circle cx="376.1" cy="337.3" r="4.8" fill="#66669c"/>
<circle cx="492" cy="344" r="5.2" fill="#d4d4d4" stroke="#66669c" stroke-width="1.4"/>
<polyline points="428.3,343.8 428.3,141.8 627.1,141.8 627.1,158" fill="none" stroke="#de9467" stroke-width="1.15" stroke-dasharray="2.2 2.3"/>
<line x1="448.5" y1="193.7" x2="605.6" y2="193.7" stroke="#de9467" stroke-width="1.15" stroke-dasharray="2.2 2.3"/>
<line x1="428.3" y1="344.3" x2="492" y2="344.3" stroke="#de9467" stroke-width="1.15" stroke-dasharray="2.2 2.3"/>
<circle cx="428.3" cy="143" r="1.3" fill="#de9467"/>
<circle cx="605.6" cy="193.6" r="1.3" fill="#de9467"/>
<circle cx="492" cy="344" r="1.3" fill="#de9467"/>
<circle cx="627.2" cy="161.2" r="1.3" fill="#de9467"/>
<polyline points="624.5,139.6 626.8,141.8 624.5,144" fill="none" stroke="#de9467" stroke-width="1.1"/>
<polyline points="450.5,191.6 448.5,193.7 450.5,195.8" fill="none" stroke="#de9467" stroke-width="1.1"/>
<polyline points="429.5,146 428.5,143.5 431,143" fill="none" stroke="#de9467" stroke-width="1.1"/>
<polyline points="430.4,342.2 428.3,344.3 430.4,346.4" fill="none" stroke="#de9467" stroke-width="1.1"/>
<polyline points="489.5,342.2 491.6,344.3 489.5,346.4" fill="none" stroke="#de9467" stroke-width="1.1"/>
<text x="531.2" y="139.4" font-family="Liberation Sans" font-weight="bold" font-size="7.4" fill="#2323c8" text-anchor="middle">725</text>
<text x="639.2" y="155.4" font-family="Liberation Sans" font-weight="bold" font-size="7.4" fill="#2323c8" text-anchor="middle">110</text>
<text x="531.2" y="191.2" font-family="Liberation Sans" font-weight="bold" font-size="7.4" fill="#2323c8" text-anchor="middle">585</text>
<text x="440.5" y="245.7" font-family="Liberation Sans" font-weight="bold" font-size="7.4" fill="#2323c8" text-anchor="middle">736</text>
<rect x="455.3" y="333.2" width="15.5" height="11.5" fill="#c9c9d8"/>
<text x="463.3" y="342.2" font-family="Liberation Sans" font-weight="bold" font-size="7.4" fill="#2323c8" text-anchor="middle">235</text>
<polygon points="492.5,429.4 514.7,442 506.8,442 506.8,455 478,455 478,442 470.8,442" fill="#3232a6"/>
<text x="492.5" y="446.2" font-family="Liberation Sans" font-size="7" fill="#fff" text-anchor="middle" letter-spacing="-0.3">Redraw!</text>
</svg>
<div class="a" style="left:0;top:0;width:2px;height:550px;background:#0d1626"></div>
</body></html>
